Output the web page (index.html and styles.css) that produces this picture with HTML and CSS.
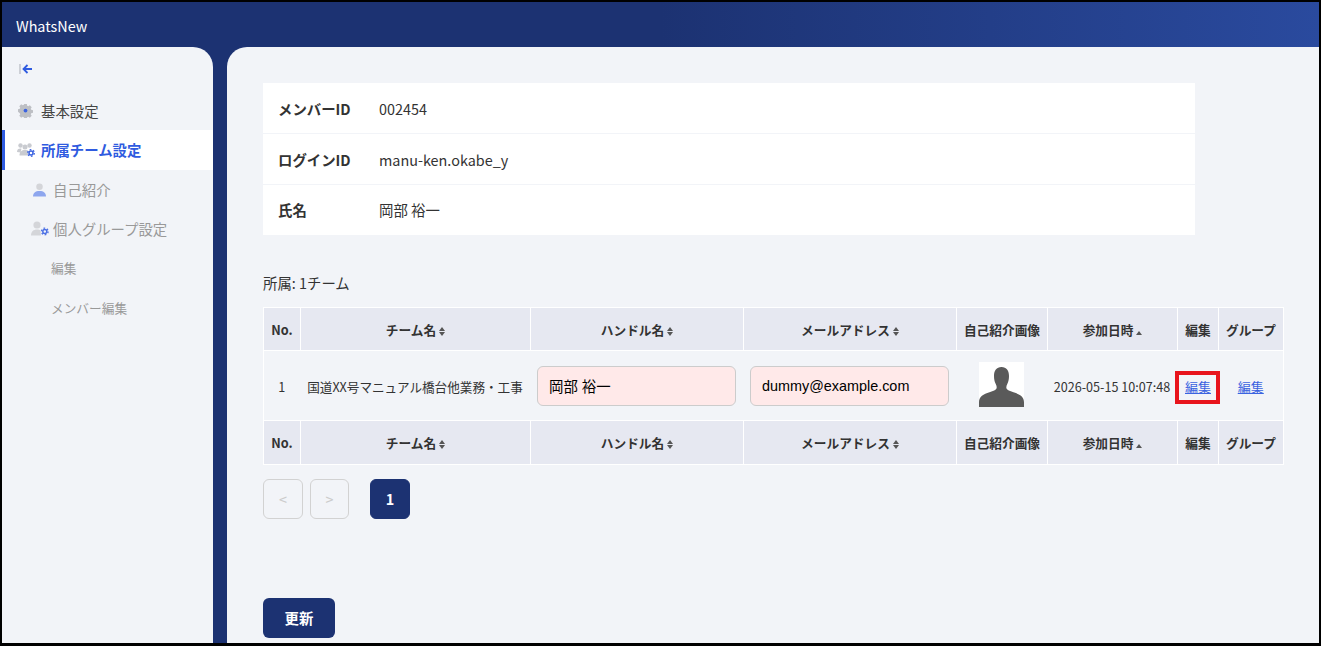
FILE: index.html
```html
<!DOCTYPE html>
<html lang="ja">

<head>
    <meta charset="utf-8"/>
    <title>WhatsNew</title>
    <link rel="stylesheet" href="styles.css">
</head>

<body>
<div class="frame">
    <header class="topbar">WhatsNew</header>

    <div class="layout">
        <nav class="sidebar">
            <div class="collapse">
                <svg width="14" height="12" viewBox="0 0 14 12">
                    <path d="M1 1v10" stroke="#c4c7ce" stroke-width="1.6" fill="none"/>
                    <path d="M13 6H5M8.500 2 4.500 6l4 4" stroke="#2f5be0" stroke-width="1.800" fill="none"/>
                </svg>
            </div>

            <a class="nav-item">
                <svg class="nav-icon" width="15" height="15" viewBox="0 0 16 16">
                    <path fill="#bdbfc4" d="M6.600 1h2.800l.4 1.900 1.100.5 1.700-1 2 2-1 1.700.5 1.100 1.900.4v2.800l-1.900.4-.5 1.100 1 1.700-2 2-1.700-1-1.100.5-.4 1.900H6.600l-.4-1.900-1.100-.5-1.700 1-2-2 1-1.700-.5-1.100L0 9.400V6.600l1.900-.4.500-1.100-1-1.700 2-2 1.700 1 1.100-.5z"/>
                    <circle cx="8" cy="8" r="2" fill="#3b63e0"/>
                </svg>
                基本設定
            </a>
            <a class="nav-item active">
                <svg class="nav-icon wide" width="18" height="14" viewBox="0 0 18 14">
                    <g fill="#c9cbd0">
                        <circle cx="3.500" cy="2.500" r="2.200"/>
                        <circle cx="12.500" cy="2.500" r="2.200"/>
                        <circle cx="8" cy="4" r="2.500"/>
                        <path d="M0 9c0-2.500 1.300-3.600 3.500-3.600l1 .4-1 3.700zM2.500 12.500c0-3.500 2-5.500 5.500-5.500 1.600 0 2.800.4 3.700 1.200l-1.200 4.300z"/>
                    </g>
                    <g fill="none" stroke="#3b63e0">
                        <circle cx="14" cy="10" r="2" stroke-width="1.500"/>
                        <circle cx="14" cy="10" r="3.300" stroke-width="1.300" stroke-dasharray="1.700 1.750"/>
                    </g>
                </svg>
                所属チーム設定
            </a>
            <a class="nav-item sub">
                <svg class="nav-icon" width="13" height="14" viewBox="0 0 14 15">
                    <circle cx="7" cy="4" r="3.500" fill="#d4d5d9"/>
                    <path fill="#8ea6ee" d="M0 14.500C0 10.500 2.500 8.500 7 8.500s7 2 7 6z"/>
                </svg>
                自己紹介
            </a>
            <a class="nav-item sub tight">
                <svg class="nav-icon" width="18" height="15" viewBox="0 0 18 15">
                    <circle cx="6" cy="4" r="3.600" fill="#d4d5d9"/>
                    <path fill="#d4d5d9" d="M0 14.500C0 10.500 2.500 8.500 6 8.500c1.500 0 2.500.3 3.500 1l.5 5z"/>
                    <g fill="none" stroke="#4c70e4">
                        <circle cx="13.800" cy="10.500" r="2" stroke-width="1.500"/>
                        <circle cx="13.800" cy="10.500" r="3.300" stroke-width="1.300" stroke-dasharray="1.700 1.750"/>
                    </g>
                </svg>
                個人グループ設定
            </a>
            <a class="nav-item third">編集</a>
            <a class="nav-item third">メンバー編集</a>
        </nav>

        <main class="content">
            <section class="profile">
                <div class="profile-row">
                    <div class="profile-label">メンバーID</div>
                    <div>002454</div>
                </div>
                <div class="profile-row">
                    <div class="profile-label">ログインID</div>
                    <div>manu-ken.okabe_y</div>
                </div>
                <div class="profile-row">
                    <div class="profile-label">氏名</div>
                    <div>岡部 裕一</div>
                </div>
            </section>

            <p class="team-count">所属: 1チーム</p>

            <table class="teams">
                <colgroup>
                    <col class="col-no">
                    <col class="col-team">
                    <col class="col-handle">
                    <col class="col-mail">
                    <col class="col-image">
                    <col class="col-date">
                    <col class="col-edit">
                    <col class="col-group">
                </colgroup>
                <thead>
                <tr>
                    <th>No.</th>
                    <th>チーム名<i class="sort"></i></th>
                    <th>ハンドル名<i class="sort"></i></th>
                    <th>メールアドレス<i class="sort"></i></th>
                    <th>自己紹介画像</th>
                    <th>参加日時<i class="sort asc"></i></th>
                    <th>編集</th>
                    <th>グループ</th>
                </tr>
                </thead>
                <tbody>
                <tr>
                    <td>1</td>
                    <td>国道XX号マニュアル橋台他業務・工事</td>
                    <td><input class="field" type="text" value="岡部 裕一"></td>
                    <td><input class="field" type="text" value="dummy@example.com"></td>
                    <td>
                        <svg class="avatar" width="45" height="45" viewBox="0 0 45 45">
                            <rect width="45" height="45" fill="#fff"/>
                            <path fill="#5a5a5a" d="M22.500 5c5 0 7.500 3.500 7.500 9 0 3-.6 5.500-1.500 7.500-1 2-1.500 3.500-1 5 .6 1.500 3 2.500 7 3.800 6 1.900 10.500 4 10.500 10V45H0v-4.700c0-6 4.500-8.100 10.500-10 4-1.300 6.400-2.300 7-3.800.5-1.500 0-3-1-5C15.600 19.500 15 17 15 14c0-5.500 2.500-9 7.500-9z"/>
                        </svg>
                    </td>
                    <td>2026-05-15 10:07:48</td>
                    <td class="marked link-cell"><a href="#">編集</a><span class="highlight"></span></td>
                    <td class="link-cell"><a href="#">編集</a></td>
                </tr>
                </tbody>
                <tfoot>
                <tr>
                    <th>No.</th>
                    <th>チーム名<i class="sort"></i></th>
                    <th>ハンドル名<i class="sort"></i></th>
                    <th>メールアドレス<i class="sort"></i></th>
                    <th>自己紹介画像</th>
                    <th>参加日時<i class="sort asc"></i></th>
                    <th>編集</th>
                    <th>グループ</th>
                </tr>
                </tfoot>
            </table>

            <div class="pager">
                <button class="page-btn" disabled>&lt;</button>
                <button class="page-btn next" disabled>&gt;</button>
                <button class="page-btn current">1</button>
            </div>

            <button class="submit">更新</button>
        </main>
    </div>
</div>
</body>

</html>
```

FILE: styles.css
```css
* {
    box-sizing: border-box;
}

html, body {
    margin: 0;
    height: 100%;
    overflow: hidden;
}

body {
    font-family: "Noto Sans CJK JP", "Noto Sans", sans-serif;
    font-size: 14.400px;
    color: #333;
}

.frame {
    height: 646px;
    border: 2px solid #000;
    border-bottom-width: 3px;
    display: flex;
    flex-direction: column;
    background: #1c3272;
    overflow: hidden;
}

.topbar {
    height: 45px;
    flex: none;
    padding: 0 14px;
    line-height: 47px;
    font-size: 14.400px;
    color: #fff;
    background: linear-gradient(90deg, #1c3272 0%, #1c3272 50%, #2a4a9e 100%);
}

.layout {
    flex: 1;
    display: flex;
    gap: 14px;
    min-height: 0;
}

.sidebar {
    width: 211px;
    flex: none;
    background: #f2f4f8;
    border-top-right-radius: 20px;
    padding-top: 16px;
}

.collapse {
    height: 14px;
    margin: 0 0 14px 17px;
    line-height: 0;
}

.nav-item {
    display: flex;
    align-items: center;
    height: 39.500px;
    padding-left: 16px;
    color: #444;
}

.nav-icon {
    flex: none;
    margin-right: 8px;
}

.nav-icon.wide {
    margin-right: 6px;
}

.nav-item.active {
    height: 40px;
    margin-top: -0.500px;
    padding-left: 12px;
    padding-bottom: 1px;
    border-left: 3px solid #2f5be0;
    background: #fff;
    color: #2f5be0;
    font-weight: 700;
}

.nav-item.sub {
    padding-left: 31px;
    color: #999;
}

.nav-item.sub .nav-icon {
    margin-right: 7px;
}

.nav-item.tight {
    padding-left: 29px;
    padding-bottom: 1px;
}

.nav-item.tight .nav-icon {
    margin-right: 4px;
}

.nav-item.third {
    padding-left: 49px;
    padding-bottom: 2px;
    font-size: 12.700px;
    color: #999;
}

.content {
    flex: 1;
    background: #f2f4f8;
    border-top-left-radius: 20px;
    padding: 36px 0 0 36px;
    min-width: 0;
}

.profile {
    width: 932px;
    background: #fff;
}

.profile-row {
    display: flex;
    align-items: center;
    height: 51px;
    padding-left: 15px;
    border-bottom: 1px solid #f2f4f8;
}

.profile-row:last-child {
    height: 50px;
    padding-bottom: 2px;
    border-bottom: none;
}

.profile-label {
    width: 101px;
    font-weight: 700;
}

.team-count {
    margin: 38px 0 14px;
    height: 20px;
    line-height: 20px;
}

.teams {
    width: 1020px;
    table-layout: fixed;
    border-collapse: collapse;
    border: 1px solid #fff;
    font-size: 12.600px;
}

.col-no { width: 37px; }
.col-team { width: 230px; }
.col-handle { width: 213px; }
.col-mail { width: 213px; }
.col-image { width: 91px; }
.col-date { width: 130px; }
.col-edit { width: 41px; }
.col-group { width: 65px; }

.teams th {
    height: 43px;
    padding: 0;
    background: #e6e8f1;
    border: 1px solid #fff;
    font-size: 12.700px;
    font-weight: 700;
    text-align: center;
    white-space: nowrap;
}

.teams tfoot th {
    height: 44px;
}

.teams td {
    height: 70px;
    padding: 2px 1px 0 0;
    text-align: center;
    white-space: nowrap;
}

.teams td.link-cell {
    padding-right: 0;
}

.sort {
    display: inline-block;
    position: relative;
    width: 6px;
    height: 9px;
    margin-left: 3px;
    vertical-align: -1px;
}

.sort::before, .sort::after {
    content: "";
    position: absolute;
    left: 0;
    border-left: 3px solid transparent;
    border-right: 3px solid transparent;
}

.sort::before {
    top: 0;
    border-bottom: 4px solid #555;
}

.sort::after {
    bottom: 0;
    border-top: 4px solid #555;
}

.sort.asc::after {
    display: none;
}

.sort.asc::before {
    top: 4px;
}

.field {
    display: block;
    width: 199px;
    height: 40px;
    margin: -2px auto 0;
    padding: 0 11px;
    border: 1px solid #ccc;
    border-radius: 6px;
    background: #ffe9e9;
    font-family: "Liberation Sans", "Noto Sans CJK JP", sans-serif;
    font-size: 14.400px;
    color: #000;
}

.avatar {
    display: block;
    margin: -4px auto 0;
}

.teams a {
    color: #3b63e0;
    font-size: 13px;
    text-decoration: underline;
}

.marked {
    position: relative;
}

.highlight {
    position: absolute;
    left: -3px;
    right: -1px;
    top: 20px;
    height: 33px;
    border: 4px solid #e8141c;
}

.pager {
    display: flex;
    margin-top: 14px;
}

.page-btn {
    width: 40px;
    height: 40px;
    padding: 0 0 2px;
    border: 1px solid #d2d2d2;
    border-radius: 6px;
    background: transparent;
    font-family: inherit;
    font-size: 14.400px;
    color: #ccc;
}

.page-btn.next {
    width: 39px;
    margin-left: 7px;
}

.page-btn.current {
    margin-left: 21px;
    border-color: #1c3272;
    background: #1c3272;
    color: #fff;
    font-weight: 700;
}

.submit {
    display: block;
    width: 72px;
    height: 40px;
    margin-top: 79px;
    padding: 0 0 2px;
    border: none;
    border-radius: 6px;
    background: #1c3272;
    font-family: inherit;
    font-size: 14.400px;
    font-weight: 700;
    color: #fff;
}
```
